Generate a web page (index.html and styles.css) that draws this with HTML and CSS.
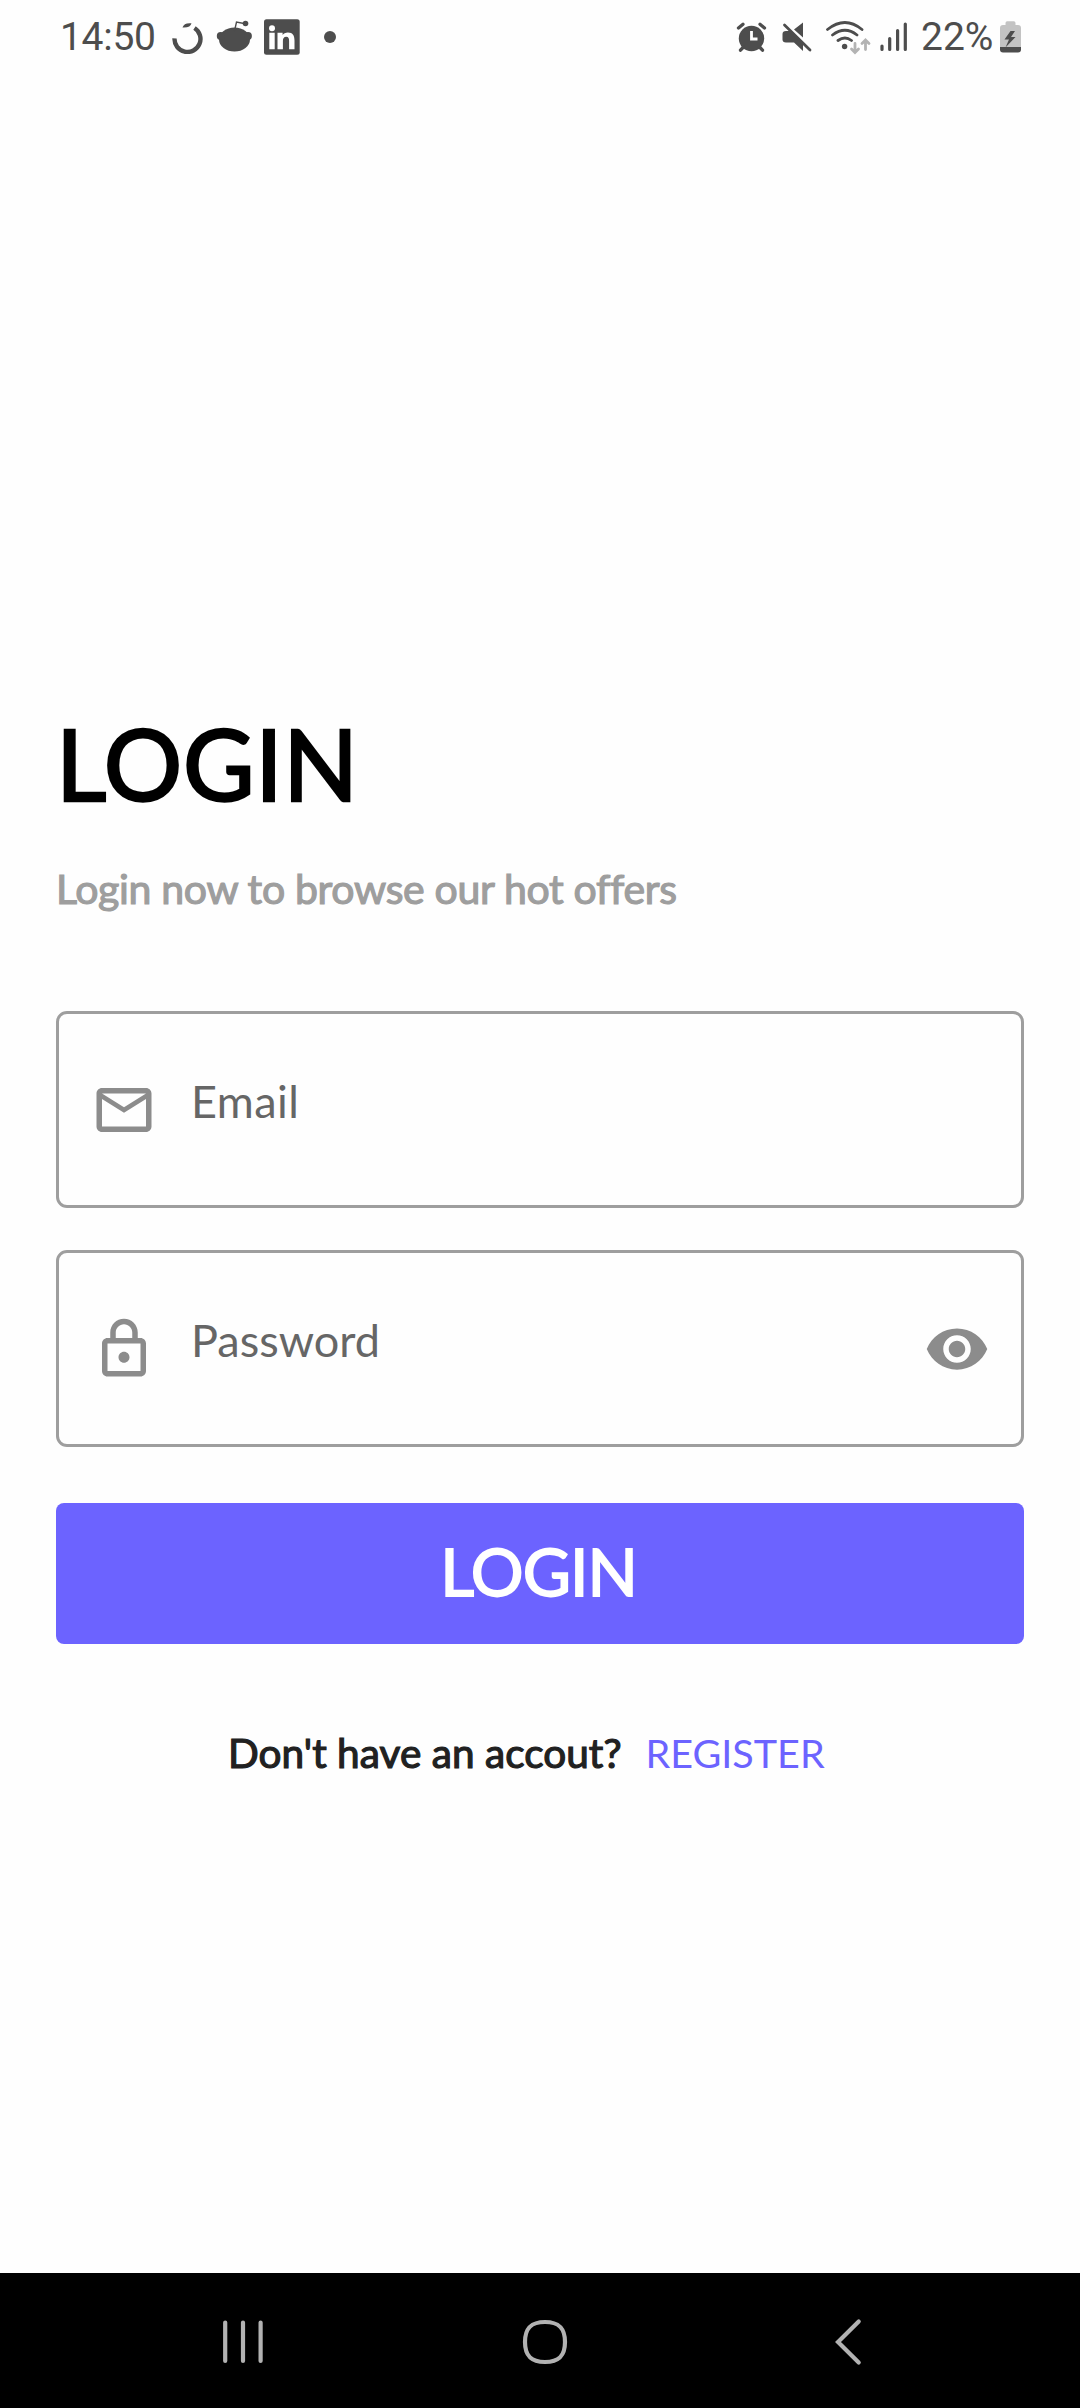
FILE: index.html
```html
<!DOCTYPE html>
<html lang="en">
<head>
<meta charset="utf-8">
<title>Login</title>
<link rel="stylesheet" href="styles.css">
</head>
<body>
<div class="screen">
  <header class="status">
    <div class="status-left">
      <span class="clock">14:50</span>
      <svg class="ring" width="34" height="34" viewBox="170 20 34 34"><path d="M174.500 38.300A13 13 0 1 0 194.500 28" fill="none" stroke="#4d4d4d" stroke-width="4.400"/><path d="M182.500 27.500Q184 22.500 191.500 23.300Q190.500 28 182.500 27.500Z" fill="#4d4d4d"/></svg>
      <svg class="reddit" width="38" height="36" viewBox="215 20 38 36" fill="#4d4d4d"><ellipse cx="234.500" cy="40.500" rx="15.500" ry="12"/><circle cx="220.700" cy="37" r="3.900"/><circle cx="248" cy="37" r="3.900"/><circle cx="245.500" cy="24.500" r="2.800"/><path d="M234.500 32L236.500 23L244 24.500" fill="none" stroke="#4d4d4d" stroke-width="1.400"/></svg>
      <svg class="linkedin" width="36" height="36" viewBox="264 19.500 36 36"><rect x="264" y="19.800" width="35.700" height="35.500" rx="2.500" fill="#4d4d4d"/><g fill="#fff"><circle cx="272" cy="28.700" r="3"/><path d="M269.300 33.300h5.400v16.500h-5.400zM277.500 33.300h5.100v2.300c1-1.700 2.900-2.700 5.300-2.700 5 0 6.600 3.200 6.600 8v8.900h-5.400v-8.200c0-2.400-.5-4.300-2.900-4.300s-3.300 1.800-3.300 4.200v8.300h-5.400z"/></g></svg>
      <span class="dot"></span>
    </div>
    <div class="status-right">
      <svg width="32" height="32" viewBox="736 21 32 32"><circle cx="751.500" cy="38.500" r="12.700" fill="#4d4d4d"/><path d="M738.500 28l4.500-3.800M764.500 28l-4.500-3.800M743.500 47l-3 3.200M759.500 47l3 3.200" stroke="#4d4d4d" stroke-width="3.300" stroke-linecap="round"/><path d="M751.500 31v8h6" fill="none" stroke="#fff" stroke-width="2.800"/></svg>
      <svg class="mute" width="32" height="32" viewBox="781 21 32 32"><path d="M803 22.500v15l-9-8zM786 31h5l12 12v8l-9-8.500h-8q-3.500 0-3.500-3v-5.500q0-3 3.500-3z" fill="#4d4d4d"/><path d="M784.500 25l25.500 25" stroke="#4d4d4d" stroke-width="2.800" stroke-linecap="round"/></svg>
      <svg class="wifi" width="46" height="36" viewBox="825 18 46 36" fill="none" stroke-linecap="round"><g stroke="#4d4d4d" stroke-width="2.800"><path d="M827.500 28.500Q845 14.500 862 28.500M832.500 34Q845 24.500 857 34M838 39.500Q845 34.500 851.500 39.500"/></g><circle cx="844.600" cy="45.500" r="2.700" fill="#4d4d4d"/><path d="M855 42.500v8.500m-3.500-3l3.500 3.500 3.500-3.500M865.500 48.500v-9m-3.500 3l3.500-3.500 3.500 3.500" stroke="#b3b3b3" stroke-width="2.800"/></svg>
      <svg class="bars" width="28" height="32" viewBox="880 21 28 32" stroke="#4d4d4d" stroke-width="3.200" stroke-linecap="round"><path d="M882 46v3.500M889.700 38.500v11M897.600 30.500v19M905.300 24v25.500"/></svg>
      <span class="battery-text">22%</span>
      <svg class="battery" width="22" height="34" viewBox="1000 20 22 34"><path d="M1005.500 25v-2q0-1.700 1.700-1.700h6.600q1.700 0 1.700 1.700v2h2.500q3 0 3 3v20h-21v-20q0-3 3-3z" fill="#c3c3c3"/><path d="M1000 47h21v2.500q0 3-3 3h-15q-3 0-3-3z" fill="#4d4d4d"/><path d="M1010.500 31l-6 8.500h4.500l-3.500 8 10-10.500h-4.500l4-6z" fill="#4d4d4d"/></svg>
    </div>
  </header>
  <main class="login">
    <h1 class="title">LOGIN</h1>
    <p class="subtitle">Login now to browse our hot offers</p>
    <div class="field">
      <svg class="icon" viewBox="0 0 24 24"><path d="M22 6c0-1.100-.9-2-2-2H4c-1.100 0-2 .9-2 2v12c0 1.100.9 2 2 2h16c1.100 0 2-.9 2-2V6zm-2 0l-8 5-8-5h16zm0 12H4V8l8 5 8-5v10z"/></svg>
      <span class="label email">Email</span>
    </div>
    <div class="field">
      <svg class="icon" viewBox="0 0 24 24"><path d="M18 8h-1V6c0-2.760-2.240-5-5-5S7 3.240 7 6v2H6c-1.100 0-2 .9-2 2v10c0 1.100.9 2 2 2h12c1.100 0 2-.9 2-2V10c0-1.100-.9-2-2-2zM9 6c0-1.660 1.340-3 3-3s3 1.340 3 3v2H9V6zm9 14H6V10h12v10zm-6-3c1.100 0 2-.9 2-2s-.9-2-2-2-2 .9-2 2 .9 2 2 2z"/></svg>
      <span class="label">Password</span>
      <svg class="icon" viewBox="0 0 24 24"><path d="M12 4.500C7 4.500 2.730 7.610 1 12c1.730 4.390 6 7.500 11 7.500s9.270-3.110 11-7.500c-1.730-4.390-6-7.500-11-7.500zM12 17c-2.760 0-5-2.240-5-5s2.240-5 5-5 5 2.240 5 5-2.240 5-5 5zm0-8c-1.660 0-3 1.340-3 3s1.340 3 3 3 3-1.340 3-3-1.340-3-3-3z"/></svg>
    </div>
    <div class="submit">LOGIN</div>
    <div class="signup"><span class="question">Don't have an accout?</span><span class="register">REGISTER</span></div>
  </main>
  <nav class="navbar">
    <svg width="44" height="46" viewBox="221 2319 44 46" stroke="#b2b2b2" stroke-width="4.200" stroke-linecap="round"><path d="M225.200 2322.500v38.500M243 2322.500v38.500M260.600 2322.500v38.500"/></svg>
    <svg class="home" width="46" height="46" viewBox="522 2319 46 46"><path d="M545 2322c14 0 20 6 20 20s-6 20-20 20-20-6-20-20 6-20 20-20z" fill="none" stroke="#b2b2b2" stroke-width="4.200"/></svg>
    <svg class="back" width="30" height="50" viewBox="834 2317 30 50"><path d="M858.700 2321.500L838 2342l20.700 20.500" fill="none" stroke="#b2b2b2" stroke-width="4.200" stroke-linecap="round"/></svg>
  </nav>
</div>
</body>
</html>
```
FILE: styles.css
```css
* { box-sizing: border-box; }
body { margin: 0; background: #fefefe; font-family: Lato, "Open Sans", sans-serif; }
svg { display: block; flex: none; }
.screen { width: 1080px; height: 2408px; display: flex; flex-direction: column; }
.status { height: 75px; padding: 0 58px 0 60px; display: flex; justify-content: space-between; color: #4d4d4d; font: 39px/74px Roboto, sans-serif; }
.status-left, .status-right { display: flex; align-items: center; height: 74px; }
.clock { width: 110px; letter-spacing: -0.3px; }
.reddit { margin-left: 11px; }
.linkedin { margin-left: 11px; }
.dot { width: 12px; height: 12px; border-radius: 50%; background: #4d4d4d; margin-left: 24px; }
.mute { margin-left: 13px; }
.wifi { margin-left: 12px; }
.bars { margin-left: 9px; }
.battery-text { margin-left: 13px; width: 79px; white-space: nowrap; }
.login { flex: 1; padding: 629px 56px 0; }
.title { margin: 0; font-size: 98px; line-height: 118px; font-weight: 400; letter-spacing: 0.7px; color: #000; -webkit-text-stroke: 2.500px #000; }
.subtitle { margin: 42px 0 97px; font-size: 41px; line-height: 50px; letter-spacing: -0.33px; color: #9e9e9e; -webkit-text-stroke: 1.200px #9e9e9e; }
.field { height: 197px; margin-bottom: 42px; padding: 0 31px 0 32px; display: flex; align-items: center; border: 3px solid #9e9e9e; border-radius: 11px; }
.icon { width: 66px; height: 66px; fill: #8c8c8c; }
.label { flex: 1; margin: 0 0 17px 34px; font-size: 45px; line-height: 54px; color: #666; }
.email { letter-spacing: 0.4px; }
.submit { height: 141px; margin-top: 56px; border-radius: 8px; background: #6c63ff; color: #fff; text-align: center; padding: 28px 3px 0 0; font-size: 66px; line-height: 80px; letter-spacing: -1px; -webkit-text-stroke: 1.800px #fff; }
.signup { display: flex; margin: 84px 0 0 172px; line-height: 50px; white-space: nowrap; }
.question { font-size: 40.500px; letter-spacing: 0.05px; color: #212121; -webkit-text-stroke: 1.200px #212121; width: 417.500px; }
.register { font-size: 39.500px; color: #6c63ff; }
.navbar { height: 135px; background: #000; display: flex; align-items: center; padding: 3px 0 0 221px; }
.home { margin-left: 257px; }
.back { margin-left: 266px; }
```
